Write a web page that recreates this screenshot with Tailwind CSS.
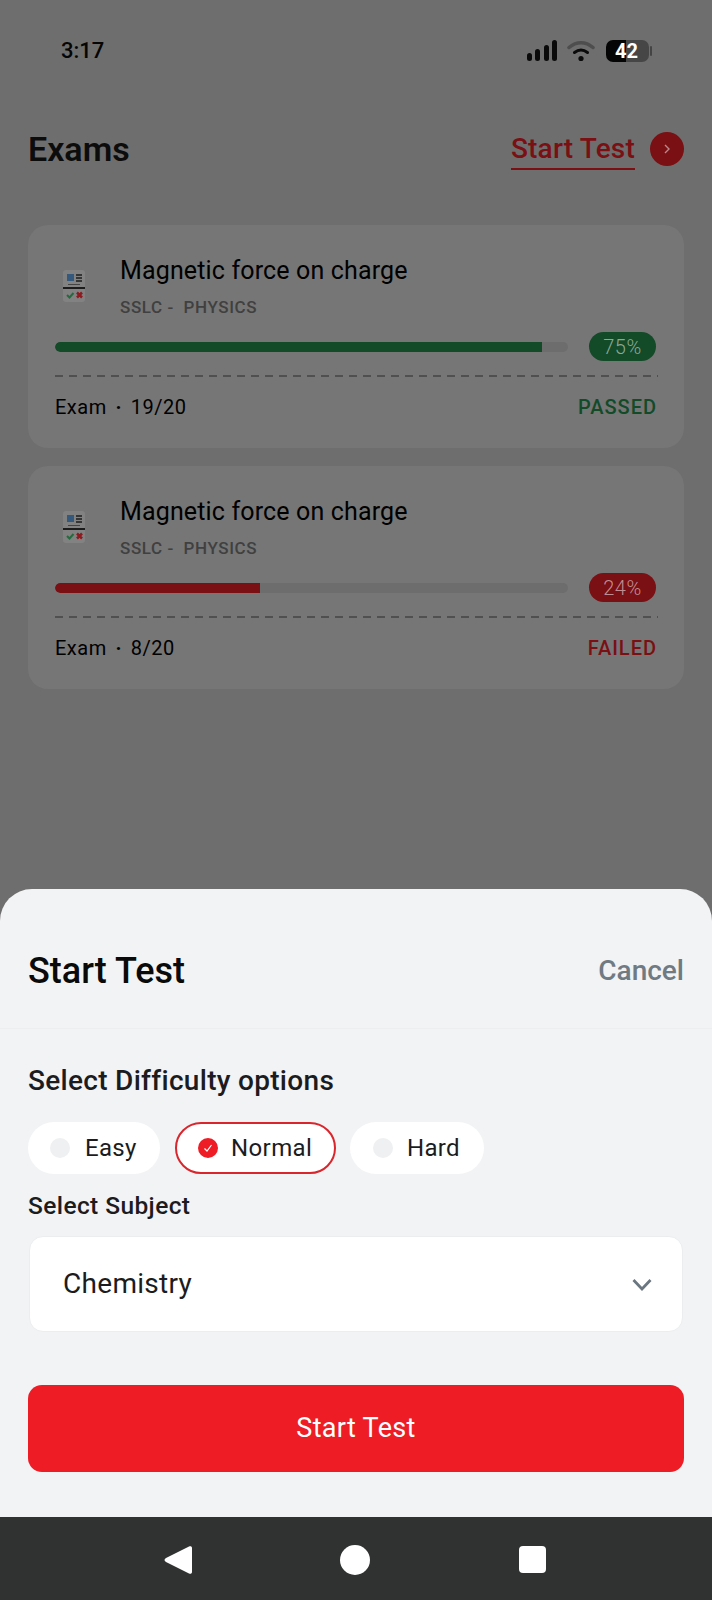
<!DOCTYPE html>
<html lang="en">
<head>
    <meta charset="UTF-8">
    <meta name="viewport" content="width=device-width, initial-scale=1.0">
    <title>Exams</title>
    <script src="https://cdn.jsdelivr.net/npm/@tailwindcss/browser@4"></script>
</head>
<body class="bg-[#6e6e6e] font-['Roboto',sans-serif] overflow-hidden">

    <div class="flex flex-col w-[712px] h-[1600px]">
        <div class="h-[889px] shrink-0">
            <!-- status bar -->
            <div class="flex items-center justify-between h-[40px] mt-[30px] pl-[61px] pr-[60px]">
                <span class="text-[22px] font-medium text-[#050505]">3:17</span>
                <div class="flex items-center gap-[10px] mt-[2px]">
                    <svg width="30" height="22" viewBox="0 0 30 22" fill="#0a0a0a">
                        <rect x="0" y="13" width="5" height="8" rx="2.5"/>
                        <rect x="8" y="9" width="5" height="12" rx="2.5"/>
                        <rect x="17" y="5" width="5" height="16" rx="2.5"/>
                        <rect x="25" y="0" width="5" height="21" rx="2.5"/>
                    </svg>
                    <svg width="28" height="22" viewBox="0 0 28 22" fill="none" stroke-linecap="round">
                        <path d="M2 7.5C9.5 1 18.5 1 26 7.5" stroke="#4e4e4e" stroke-width="3.5"/>
                        <path d="M7.5 12.5C11.5 9.5 16.5 9.5 20.5 12.5" stroke="#0a0a0a" stroke-width="3"/>
                        <circle cx="14" cy="18.5" r="2.6" fill="#0a0a0a"/>
                    </svg>
                    <div class="flex items-center gap-[1px] ml-[1px]">
                        <div class="flex items-center justify-center w-[43px] h-[22px] pr-[2px] rounded-[7px] bg-[linear-gradient(90deg,#050505_47%,#464646_47%)] text-[20px] font-bold text-white">42</div>
                        <div class="w-[2px] h-[10px] rounded-full bg-[#444]"></div>
                    </div>
                </div>
            </div>

            <!-- header -->
            <div class="flex items-center justify-between mt-[58px] px-[28px] h-[40px]">
                <h1 class="text-[34px] font-semibold text-[#0c0c0c] mt-[2px]">Exams</h1>
                <div class="flex items-center gap-[15px]">
                    <span class="text-[28px] leading-[35px] font-medium tracking-[0.2px] text-[#7a0f14] border-b-2 border-[#7a0f14] pb-[2px] mt-[5px]">Start Test</span>
                    <span class="flex items-center justify-center w-[34px] h-[34px] rounded-full bg-[#7a0f14] mt-[1px]">
                        <svg width="10" height="12" viewBox="0 0 10 12" fill="none" stroke="#b98a8c" stroke-width="1.4"><path d="M3 2l4 4-4 4"/></svg>
                    </span>
                </div>
            </div>

            <!-- exam cards -->
            <div class="flex flex-col gap-[18px] mt-[57px] mx-[28px]">
                <div class="h-[223px] rounded-[20px] bg-[#767676] pt-[32px] px-[27px]">
                    <div class="flex">
                        <svg class="ml-[8px] mt-[13px]" width="22" height="32" viewBox="0 0 22 32">
                            <rect width="22" height="32" rx="3" fill="#828282"/>
                            <rect x="4" y="4" width="7" height="7" fill="#35597d"/>
                            <path d="M13 5h6M13 8h6M13 11h6" stroke="#1c1c1c" stroke-width="1.5"/>
                            <path d="M5 14.5h12" stroke="#444" stroke-width="1"/>
                            <path d="M0 18h22" stroke="#1c1c1c" stroke-width="2"/>
                            <path d="M4 25l2.500 2.500 4-4.500" stroke="#256a3e" stroke-width="2" fill="none"/>
                            <path d="M14 22.500l5 5m0-5l-5 5" stroke="#8c1a1f" stroke-width="2.500"/>
                        </svg>
                        <div class="ml-[35px]">
                            <p class="text-[25px] leading-[28px] tracking-[0.15px] text-black">Magnetic force on charge</p>
                            <p class="mt-[13px] text-[17px] leading-[18px] font-medium tracking-[0.6px] text-[#404040] whitespace-pre">SSLC -  PHYSICS</p>
                        </div>
                    </div>
                    <div class="flex items-center mt-[16px]">
                        <div class="w-[513px] h-[10px] rounded-full bg-[#6d6d6d] overflow-hidden">
                            <div class="h-full bg-[#134a28] rounded-l-full" style="width:95%"></div>
                        </div>
                        <span class="flex items-center justify-center ml-[21px] w-[67px] h-[29px] rounded-full bg-[#134a28] text-[20px] font-light tracking-[0.5px] text-[#8aa893]">75%</span>
                    </div>
                    <div class="mt-[14px] -mr-[1px] h-[2px] bg-[repeating-linear-gradient(90deg,#505050_0_8px,transparent_8px_14px)]"></div>
                    <div class="flex items-center justify-between mt-[18px]">
                        <span class="text-[20px] leading-[24px] tracking-[0.5px] text-black">Exam<span class="inline-block w-[24px] text-center font-bold">·</span>19/20</span>
                        <span class="text-[20px] leading-[24px] font-medium tracking-[1px] text-[#134a28]">PASSED</span>
                    </div>
                </div>

                <div class="h-[223px] rounded-[20px] bg-[#767676] pt-[32px] px-[27px]">
                    <div class="flex">
                        <svg class="ml-[8px] mt-[13px]" width="22" height="32" viewBox="0 0 22 32">
                            <rect width="22" height="32" rx="3" fill="#828282"/>
                            <rect x="4" y="4" width="7" height="7" fill="#35597d"/>
                            <path d="M13 5h6M13 8h6M13 11h6" stroke="#1c1c1c" stroke-width="1.5"/>
                            <path d="M5 14.5h12" stroke="#444" stroke-width="1"/>
                            <path d="M0 18h22" stroke="#1c1c1c" stroke-width="2"/>
                            <path d="M4 25l2.500 2.500 4-4.500" stroke="#256a3e" stroke-width="2" fill="none"/>
                            <path d="M14 22.500l5 5m0-5l-5 5" stroke="#8c1a1f" stroke-width="2.500"/>
                        </svg>
                        <div class="ml-[35px]">
                            <p class="text-[25px] leading-[28px] tracking-[0.15px] text-black">Magnetic force on charge</p>
                            <p class="mt-[13px] text-[17px] leading-[18px] font-medium tracking-[0.6px] text-[#404040] whitespace-pre">SSLC -  PHYSICS</p>
                        </div>
                    </div>
                    <div class="flex items-center mt-[16px]">
                        <div class="w-[513px] h-[10px] rounded-full bg-[#6d6d6d] overflow-hidden">
                            <div class="h-full bg-[#7a0f14] rounded-l-full" style="width:40%"></div>
                        </div>
                        <span class="flex items-center justify-center ml-[21px] w-[67px] h-[29px] rounded-full bg-[#7a0f14] text-[20px] font-light tracking-[0.5px] text-[#c08e90]">24%</span>
                    </div>
                    <div class="mt-[14px] -mr-[1px] h-[2px] bg-[repeating-linear-gradient(90deg,#505050_0_8px,transparent_8px_14px)]"></div>
                    <div class="flex items-center justify-between mt-[18px]">
                        <span class="text-[20px] leading-[24px] tracking-[0.5px] text-black">Exam<span class="inline-block w-[24px] text-center font-bold">·</span>8/20</span>
                        <span class="text-[20px] leading-[24px] font-medium tracking-[1px] text-[#7a0f14]">FAILED</span>
                    </div>
                </div>
            </div>
        </div>

        <!-- bottom sheet -->
        <div class="flex-1 flex flex-col rounded-t-[32px] bg-[#f2f3f5]">
            <div class="flex items-center justify-between h-[140px] pt-[24px] px-[28px] border-b border-[#eceef0]">
                <h2 class="text-[36px] font-medium text-[#0a0a0a]">Start Test</h2>
                <span class="text-[28px] font-medium text-[#6f7a82]">Cancel</span>
            </div>
            <div class="flex-1 px-[28px]">
                <p class="mt-[36px] text-[28px] leading-[32px] font-medium tracking-[0.3px] text-[#1c1c1e]">Select Difficulty options</p>
                <div class="flex gap-[14px] mt-[25px]">
                    <div class="flex items-center w-[132px] h-[52px] pl-[22px] gap-[15px] rounded-full bg-white">
                        <span class="w-[20px] h-[20px] rounded-full bg-[#eff0f2]"></span>
                        <span class="text-[24px] tracking-[0.3px] text-[#1c1c1e]">Easy</span>
                    </div>
                    <div class="flex items-center w-[161px] h-[52px] ml-[1px] pl-[21px] gap-[13px] rounded-full bg-white border-2 border-[#d9252c]">
                        <span class="flex items-center justify-center w-[20px] h-[20px] rounded-full bg-[#ee1c25]">
                            <svg width="12" height="12" viewBox="0 0 12 12" fill="none" stroke="#fff" stroke-width="1.200"><path d="M2.500 6.500l2.500 2.500 4.500-6"/></svg>
                        </span>
                        <span class="text-[24px] tracking-[0.4px] text-[#1c1c1e]">Normal</span>
                    </div>
                    <div class="flex items-center w-[134px] h-[52px] pl-[23px] gap-[14px] rounded-full bg-white">
                        <span class="w-[20px] h-[20px] rounded-full bg-[#eff0f2]"></span>
                        <span class="text-[24px] tracking-[0.3px] text-[#1c1c1e]">Hard</span>
                    </div>
                </div>
                <p class="mt-[18px] text-[24.5px] leading-[28px] font-medium tracking-[0.4px] text-[#1c1c1e]">Select Subject</p>
                <div class="flex items-center justify-between mt-[16px] mx-[1px] h-[96px] pl-[33px] pr-[30px] rounded-[14px] bg-white border border-[#ebedef]">
                    <span class="text-[28px] tracking-[0.3px] text-[#1c1c1e]">Chemistry</span>
                    <svg width="20" height="13" viewBox="0 0 20 13" fill="none" stroke="#6b7780" stroke-width="2.800"><path d="M1.500 2l8.500 9 8.500-9"/></svg>
                </div>
                <button class="block w-full h-[87px] mt-[53px] rounded-[14px] bg-[#ee1c25] text-[27px] tracking-[0.3px] text-white">Start Test</button>
            </div>
            <!-- android nav bar -->
            <div class="flex items-center justify-center h-[83px] bg-[#303131]">
                <div class="grid grid-cols-3 items-center justify-items-center w-[531px] mt-[2px] -ml-[2px]">
                    <svg width="28" height="30" viewBox="0 0 28 30" fill="#fff"><path d="M25 1.500c1.500-.8 3-.2 3 1.500v24c0 1.700-1.500 2.300-3 1.500L2 17c-2-1-2-3 0-4z"/></svg>
                    <span class="w-[30px] h-[30px] rounded-full bg-white"></span>
                    <span class="w-[27px] h-[27px] rounded-[4px] bg-white"></span>
                </div>
            </div>
        </div>
    </div>

</body>
</html>
